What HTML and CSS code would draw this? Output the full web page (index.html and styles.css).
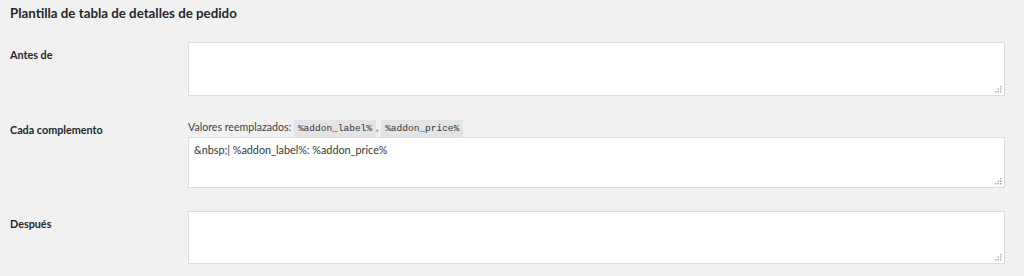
FILE: index.html
```html
<!DOCTYPE html>
<html lang="es">
<head>
    <meta charset="UTF-8">
    <meta name="viewport" content="width=device-width, initial-scale=1.0">
    <title>Plantilla de tabla de detalles de pedido</title>
    <link rel="stylesheet" href="styles.css">
</head>
<body>
    <div class="settings">
        <h2>Plantilla de tabla de detalles de pedido</h2>

        <div class="form-row first">
            <label for="before">Antes de</label>
            <div class="field">
                <div class="textarea-wrap">
                    <textarea id="before"></textarea>
                    <svg class="grip" width="7" height="7" viewBox="0 0 7 7"><rect x="5" y="0" width="1.4" height="1.4"/><rect x="2.5" y="2.5" width="1.4" height="1.4"/><rect x="5" y="2.5" width="1.4" height="1.4"/><rect x="0" y="5" width="1.4" height="1.4"/><rect x="2.5" y="5" width="1.4" height="1.4"/><rect x="5" y="5" width="1.4" height="1.4"/></svg>
                </div>
            </div>
        </div>

        <div class="form-row">
            <label for="each">Cada complemento</label>
            <div class="field">
                <p class="description">Valores reemplazados: <code>%addon_label%</code>, <code>%addon_price%</code></p>
                <div class="textarea-wrap">
                    <textarea id="each" class="short">&amp;nbsp;| %addon_label%: %addon_price%</textarea>
                    <svg class="grip" width="7" height="7" viewBox="0 0 7 7"><rect x="5" y="0" width="1.4" height="1.4"/><rect x="2.5" y="2.5" width="1.4" height="1.4"/><rect x="5" y="2.5" width="1.4" height="1.4"/><rect x="0" y="5" width="1.4" height="1.4"/><rect x="2.5" y="5" width="1.4" height="1.4"/><rect x="5" y="5" width="1.4" height="1.4"/></svg>
                </div>
            </div>
        </div>

        <div class="form-row">
            <label for="after">Después</label>
            <div class="field">
                <div class="textarea-wrap">
                    <textarea id="after" class="last"></textarea>
                    <svg class="grip" width="7" height="7" viewBox="0 0 7 7"><rect x="5" y="0" width="1.4" height="1.4"/><rect x="2.5" y="2.5" width="1.4" height="1.4"/><rect x="5" y="2.5" width="1.4" height="1.4"/><rect x="0" y="5" width="1.4" height="1.4"/><rect x="2.5" y="5" width="1.4" height="1.4"/><rect x="5" y="5" width="1.4" height="1.4"/></svg>
                </div>
            </div>
        </div>
    </div>
</body>
</html>
```

FILE: styles.css
```css
body {
    font-family: 'Lato', 'Noto Sans', sans-serif;
    background-color: #f1f1f1;
    color: #23282d;
    margin: 0;
    padding: 0;
}
.settings {
    padding: 0 10px;
}
h2 {
    margin: 0;
    padding-top: 4px;
    font-size: 13.3px;
    font-weight: 700;
    line-height: 18px;
}
.form-row {
    display: grid;
    grid-template-columns: 178px 817px;
    margin-top: 23px;
}
.form-row.first {
    margin-top: 20px;
}
.form-row label {
    font-size: 10.8px;
    font-weight: 700;
    line-height: 16px;
    padding-top: 5px;
}
.description {
    margin: 0;
    font-size: 10.6px;
    line-height: 16px;
    color: #3c434a;
}
.form-row:nth-child(3) label {
    padding-top: 3px;
}
code {
    font-family: 'Liberation Mono', monospace;
    font-size: 9.5px;
    background-color: #e4e4e4;
    padding: 3px 4px 3px;
    color: #32373c;
}
.textarea-wrap {
    position: relative;
}
textarea {
    display: block;
    box-sizing: border-box;
    width: 100%;
    height: 54px;
    margin: 0;
    padding: 4px 5px;
    border: 1px solid #dddddd;
    border-radius: 0;
    background-color: #ffffff;
    font-family: 'Lato', 'Noto Sans', sans-serif;
    font-size: 10.8px;
    line-height: 16px;
    color: #32373c;
    outline: none;
    resize: none;
}
textarea.short {
    height: 51px;
}
textarea.last {
    height: 53px;
}
.grip {
    position: absolute;
    right: 3px;
    bottom: 3px;
    fill: #a7a7a7;
}
```
